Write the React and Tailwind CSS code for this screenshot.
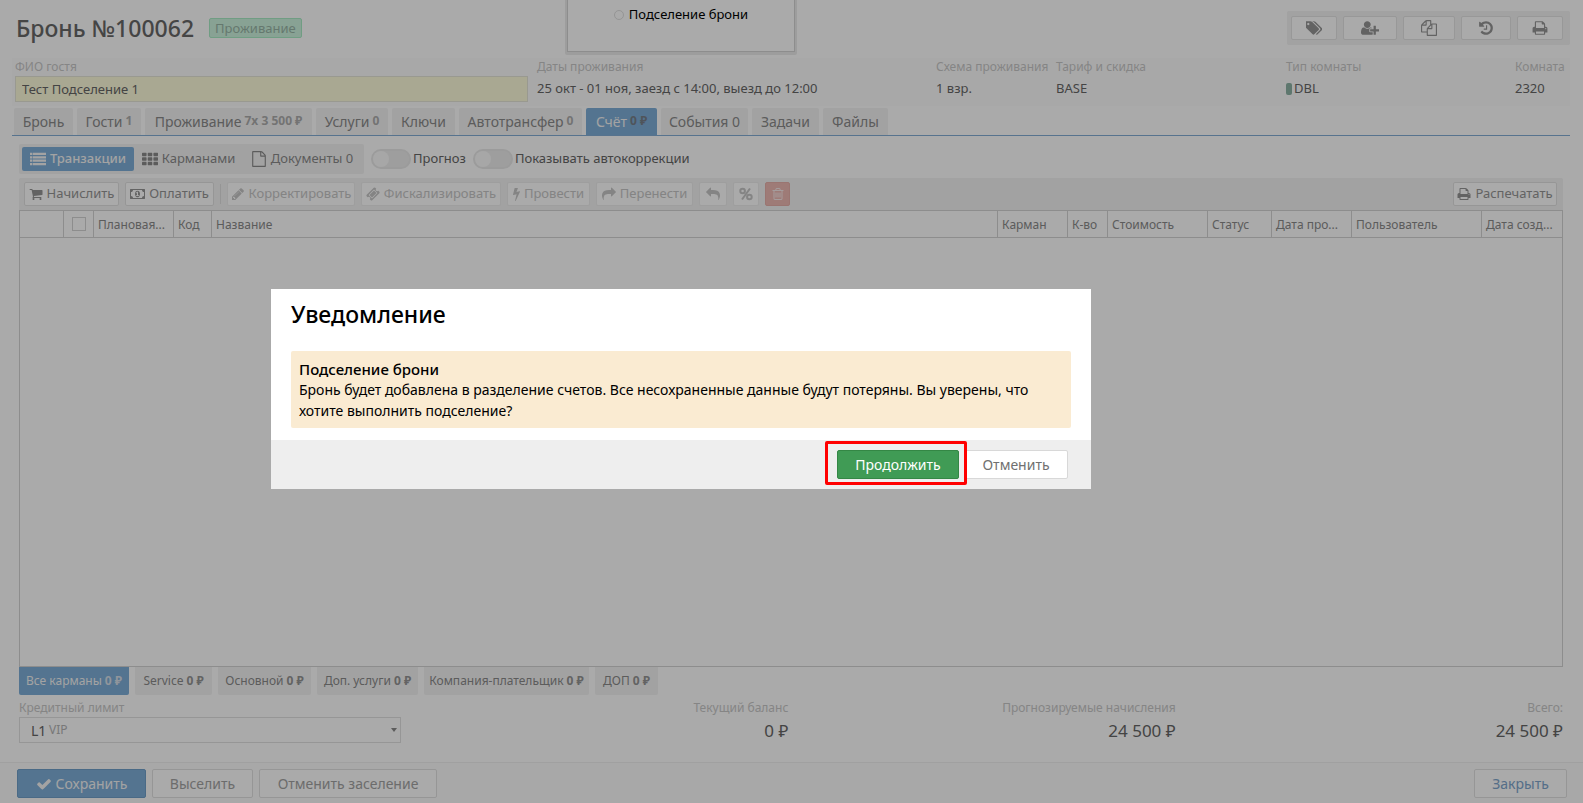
const ICONS = {
  tags: [
    "0 0 1835 1792",
    "M384 448q0-53-37.5-90.5t-90.5-37.5-90.5 37.5-37.5 90.5 37.5 90.5 90.5 37.5 90.5-37.5 37.5-90.5zm1067 576q0 53-37 90l-491 492q-39 37-91 37-53 0-90-37l-715-716q-38-37-64.5-101t-26.5-117v-416q0-52 38-90t90-38h416q53 0 117 26.5t102 64.5l715 714q37 39 37 91zm384 0q0 53-37 90l-491 492q-39 37-91 37-36 0-59-14t-53-45l470-470q37-37 37-90 0-52-37-91l-715-714q-38-38-102-64.5t-117-26.5h224q53 0 117 26.5t102 64.5l715 714q37 39 37 91z",
  ],
  userPlus: [
    "0 0 2048 1792",
    "M704 896q-159 0-271.5-112.5t-112.5-271.5 112.5-271.5 271.5-112.5 271.5 112.5 112.5 271.5-112.5 271.5-271.5 112.5zm960 128h352q13 0 22.5 9.5t9.5 22.5v192q0 13-9.5 22.5t-22.5 9.5h-352v352q0 13-9.5 22.5t-22.5 9.5h-192q-13 0-22.5-9.5t-9.5-22.5v-352h-352q-13 0-22.5-9.5t-9.5-22.5v-192q0-13 9.5-22.5t22.5-9.5h352v-352q0-13 9.5-22.5t22.5-9.5h192q13 0 22.5 9.5t9.5 22.5v352zm-736 224q0 52 38 90t90 38h256v238q-68 50-171 50h-874q-121 0-194-69t-73-190q0-53 3.5-103.5t14-109 26.5-108.5 43-97.5 62-81 85.5-53.5 111.5-20q19 0 39 17 79 61 154.5 91.5t164.5 30.5 164.5-30.5 154.5-91.5q20-17 39-17 132 0 217 96h-223q-52 0-90 38t-38 90v192z",
  ],
  files: [
    "0 0 1792 1792",
    "M1696 384q40 0 68 28t28 68v1216q0 40-28 68t-68 28h-960q-40 0-68-28t-28-68v-288h-544q-40 0-68-28t-28-68v-672q0-40 20-88t48-76l408-408q28-28 76-48t88-20h416q40 0 68 28t28 68v328q68-40 128-40h416zm-544 213l-299 299h299v-299zm-640-384l-299 299h299v-299zm196 647l316-316v-416h-384v416q0 40-28 68t-68 28h-416v640h512v-256q0-40 20-88t48-76zm956 804v-1152h-384v416q0 40-28 68t-68 28h-416v640h896z",
  ],
  history: [
    "0 0 1792 1792",
    "M1664 896q0 156-61 298t-164 245-245 164-298 61q-172 0-327-72.5t-264-204.5q-7-10-6.5-22.5t8.5-20.5l137-138q10-9 25-9 16 2 23 12 73 95 179 147t225 52q104 0 198.5-40.5t163.5-109.5 109.5-163.5 40.5-198.5-40.5-198.5-109.5-163.5-163.5-109.5-198.5-40.5q-98 0-188 35.5t-160 101.5l137 138q31 30 14 69-17 40-59 40h-448q-26 0-45-19t-19-45v-448q0-42 40-59 39-17 69 14l130 129q107-101 244.5-156.5t284.5-55.5q156 0 298 61t245 164 164 245 61 298zm-640-288v448q0 14-9 23t-23 9h-320q-14 0-23-9t-9-23v-64q0-14 9-23t23-9h224v-352q0-14 9-23t23-9h64q14 0 23 9t9 23z",
  ],
  print: [
    "0 0 1792 1792",
    "M448 1536h896v-256h-896v256zm0-640h896v-384h-160q-40 0-68-28t-28-68v-160h-640v640zm1152 64q0-26-19-45t-45-19-45 19-19 45 19 45 45 19 45-19 19-45zm128 0v416q0 13-9.5 22.5t-22.5 9.5h-224v160q0 40-28 68t-68 28h-960q-40 0-68-28t-28-68v-160h-224q-13 0-22.5-9.5t-9.5-22.5v-416q0-79 56.5-135.5t135.5-56.5h64v-544q0-40 28-68t68-28h672q40 0 88 20t76 48l152 152q28 28 48 76t20 88v256h64q79 0 135.5 56.5t56.5 135.5z",
  ],
  list: [
    "0 0 1792 1792",
    "M0 192h256v256h-256zM320 192h1472v256h-1472zM0 576h256v256h-256zM320 576h1472v256h-1472zM0 960h256v256h-256zM320 960h1472v256h-1472zM0 1344h256v256h-256zM320 1344h1472v256h-1472z",
  ],
  grid: [
    "0 0 1792 1792",
    "M60 192h400l52 60v264l-52 60h-400l-60-60v-264zM700 192h400l52 60v264l-52 60h-400l-60-60v-264zM1340 192h400l52 60v264l-52 60h-400l-60-60v-264zM60 704h400l52 60v264l-52 60h-400l-60-60v-264zM700 704h400l52 60v264l-52 60h-400l-60-60v-264zM1340 704h400l52 60v264l-52 60h-400l-60-60v-264zM60 1216h400l52 60v264l-52 60h-400l-60-60v-264zM700 1216h400l52 60v264l-52 60h-400l-60-60v-264zM1340 1216h400l52 60v264l-52 60h-400l-60-60v-264z",
  ],
  file: [
    "0 0 1792 1792",
    "M1596 380q28 28 48 76t20 88v1152q0 40-28 68t-68 28h-1344q-40 0-68-28t-28-68v-1600q0-40 28-68t68-28h896q40 0 88 20t76 48zm-444-244v376h376q-10-29-22-41l-313-313q-12-12-41-22zm384 1528v-1024h-416q-40 0-68-28t-28-68v-416h-768v1536h1280z",
  ],
  cart: [
    "0 0 1792 1792",
    "M704 1536q0 52-38 90t-90 38-90-38-38-90 38-90 90-38 90 38 38 90zm896 0q0 52-38 90t-90 38-90-38-38-90 38-90 90-38 90 38 38 90zm128-1088v512q0 24-16.5 42.5t-40.5 21.5l-1044 122q13 60 13 70 0 16-24 64h920q26 0 45 19t19 45-19 45-45 19h-1024q-26 0-45-19t-19-45q0-11 8-31.5t16-36 21.5-40 15.5-29.5l-177-823h-204q-26 0-45-19t-19-45 19-45 45-19h256q16 0 28.5 6.5t19.5 15.5 13 24.5 8 26 5.5 29.5 4.5 26h1201q26 0 45 19t19 45z",
  ],
  money: [
    "0 0 1920 1792",
    "M768 1152h384v-96h-128v-448h-114l-148 137 77 80q42-37 55-57h2v288h-128v96zm512-256q0 70-21 142t-59.5 134-101.5 101-138 39-138-39-101.5-101-59.5-134-21-142 21-142 59.5-134 101.5-101 138-39 138 39 101.5 101 59.5 134 21 142zm512 256v-512q-106 0-181-75t-75-181h-1152q0 106-75 181t-181 75v512q106 0 181 75t75 181h1152q0-106 75-181t181-75zm128-832v1152q0 26-19 45t-45 19h-1792q-26 0-45-19t-19-45v-1152q0-26 19-45t45-19h1792q26 0 45 19t19 45z",
  ],
  pencil: [
    "0 0 1792 1792",
    "M491 1536l91-91-235-235-91 91v107h128v128h107zm523-928q0-22-22-22-10 0-17 7l-542 542q-7 7-7 17 0 22 22 22 10 0 17-7l542-542q7-7 7-17zm-54-192l416 416-832 832h-416v-416zm683 96q0 53-37 90l-166 166-416-416 166-165q36-38 90-38 53 0 91 38l235 234q37 39 37 91z",
  ],
  ticket: [
    "0 0 1792 1792",
    "M1024 452l316 316-572 572-316-316zm-211 979l618-618q19-19 19-45t-19-45l-362-362q-18-18-45-18t-45 18l-618 618q-19 19-19 45t19 45l362 362q18 18 45 18t45-18zm889-637l-907 908q-37 37-90.5 37t-90.5-37l-126-126q56-56 56-136t-56-136-136-56-136 56l-125-126q-37-37-37-90.5t37-90.5l907-906q37-37 90.5-37t90.5 37l125 125q-56 56-56 136t56 136 136 56 136-56l126 125q37 37 37 90.5t-37 90.5z",
  ],
  bolt: [
    "448 0 896 1792",
    "M1333 566q18 20 7 44l-540 1157q-13 25-42 25-4 0-14-2-17-5-25.5-19t-4.5-30l197-808-406 101q-4 1-12 1-18 0-31-11-18-15-13-39l201-825q4-14 16-23t28-9h328q19 0 32 12.5t13 29.5q0 8-5 18l-171 463 396-98q8-2 12-2 19 0 34 15z",
  ],
  share: [
    "0 0 1792 1792",
    "M1792 640q0 26-19 45l-512 512q-19 19-45 19t-45-19-19-45v-256h-224q-98 0-175.5 6t-154 21.5-133 42.5-105.5 69.5-80 101-48.5 138.5-17.5 181q0 55 5 123 0 6 2.5 23.5t2.5 26.5q0 15-8.5 25t-23.5 10q-16 0-28-17-7-9-13-22t-13.5-30-10.5-24q-127-285-127-451 0-199 53-333 162-403 875-403h224v-256q0-26 19-45t45-19 45 19l512 512q19 19 19 45z",
  ],
  trash: [
    "0 0 1792 1792",
    "M704 736v576q0 14-9 23t-23 9h-64q-14 0-23-9t-9-23v-576q0-14 9-23t23-9h64q14 0 23 9t9 23zm256 0v576q0 14-9 23t-23 9h-64q-14 0-23-9t-9-23v-576q0-14 9-23t23-9h64q14 0 23 9t9 23zm256 0v576q0 14-9 23t-23 9h-64q-14 0-23-9t-9-23v-576q0-14 9-23t23-9h64q14 0 23 9t9 23zm128 724v-948h-896v948q0 22 7 40.5t14.5 27 10.5 8.5h832q3 0 10.5-8.5t14.5-27 7-40.5zm-672-1076h448l-48-117q-7-9-17-11h-317q-10 2-17 11zm928 32v64q0 14-9 23t-23 9h-96v948q0 83-47 143.5t-113 60.5h-832q-66 0-113-58.5t-47-141.5v-952h-96q-14 0-23-9t-9-23v-64q0-14 9-23t23-9h309l70-167q15-37 54-63t79-26h320q40 0 79 26t54 63l70 167h309q14 0 23 9t9 23z",
  ],
  check: [
    "0 0 1792 1792",
    "M1671 566q0 40-28 68l-724 724-136 136q-28 28-68 28t-68-28l-136-136-362-362q-28-28-28-68t28-68l136-136q28-28 68-28t68 28l294 295 656-657q28-28 68-28t68 28l136 136q28 28 28 68z",
  ],
};

function Icon({ name, className = "h-[14px]" }) {
  if (name === "percent") {
    return (
      <svg viewBox="0 0 14 14" className={`shrink-0 ${className}`} fill="none" stroke="currentColor" strokeWidth="2" aria-hidden="true">
        <circle cx="3.6" cy="4" r="2.3" />
        <circle cx="10.4" cy="10" r="2.3" />
        <path d="M11 1.5L3 12.5" />
      </svg>
    );
  }
  const [viewBox, d] = ICONS[name];
  return (
    <svg viewBox={viewBox} className={`shrink-0 ${className}`} fill="currentColor" aria-hidden="true">
      <path d={d} />
    </svg>
  );
}

const headerActions = [
  { icon: "tags", label: "Метки", width: "w-[46px]" },
  { icon: "userPlus", label: "Добавить гостя", width: "w-[54px]" },
  { icon: "files", label: "Копировать", width: "w-[52px]" },
  { icon: "history", label: "История", width: "w-[50px]" },
  { icon: "print", label: "Печать", width: "w-[46px]" },
];

const tabs = [
  { label: "Бронь", width: "w-[59px]" },
  { label: "Гости", extra: "1", width: "w-[64px]" },
  { label: "Проживание", extra: "7x 3 500 ₽", width: "w-[167px]" },
  { label: "Услуги", extra: "0", width: "w-[72px]" },
  { label: "Ключи", width: "w-[63px]" },
  { label: "Автотрансфер", extra: "0", width: "w-[123px]" },
  { label: "Счёт", extra: "0 ₽", width: "w-[71px]", active: true },
  { label: "События 0", width: "w-[87px]" },
  { label: "Задачи", width: "w-[67px]" },
  { label: "Файлы", width: "w-[65px]" },
];

const columns = [
  { label: "Плановая...", width: "w-[80px]" },
  { label: "Код", width: "w-[38px]" },
  { label: "Название", width: "" },
  { label: "Карман", width: "w-[70px]" },
  { label: "К-во", width: "w-[40px]" },
  { label: "Стоимость", width: "w-[100px]" },
  { label: "Статус", width: "w-[64px]" },
  { label: "Дата про...", width: "w-[80px]" },
  { label: "Пользователь", width: "w-[130px]" },
  { label: "Дата созд...", width: "w-[80px]" },
];

const pockets = [
  { label: "Все карманы", width: "w-[110px]", active: true },
  { label: "Service", width: "w-[77px]" },
  { label: "Основной", width: "w-[93px]" },
  { label: "Доп. услуги", width: "w-[101px]" },
  { label: "Компания-плательщик", width: "w-[165px]" },
  { label: "ДОП", width: "w-[63px]" },
];

function ToolButton({ icon, label, children, width, disabled, flip }) {
  return (
    <button
      disabled={disabled}
      aria-label={label}
      className={`flex h-6 items-center justify-center gap-1 rounded-xs border bg-white text-[13px] ${width} ${
        disabled ? "border-[#eeeeee] text-[#c6c6c6]" : "border-[#e2e2e2] text-[#959595]"
      }`}
    >
      <Icon name={icon} className={flip ? "h-[14px] -scale-x-100" : "h-[14px]"} />
      {children}
    </button>
  );
}

function Toggle({ label }) {
  return (
    <label className="flex items-center gap-[2px] text-[13px] text-[#666666]">
      <input
        type="checkbox"
        role="switch"
        className="h-5 w-10 appearance-none rounded-full border-2 border-[#e9e9e9] bg-[#eeeeee] before:block before:size-4 before:rounded-full before:bg-[#fbfbfb]"
      />
      {label}
    </label>
  );
}

function Field({ label, children, width }) {
  return (
    <div className={`shrink-0 ${width}`}>
      <p className="text-[12px] leading-[18px] whitespace-nowrap text-[#c8c8c8]">{label}</p>
      <p className="flex h-[26px] items-center gap-[2px] text-[13px] whitespace-nowrap text-[#666666]">{children}</p>
    </div>
  );
}

function Balance({ label, value }) {
  return (
    <div className="flex-1 text-right">
      <p className="text-[12px] leading-[18px] text-[#c8c8c8]">{label}</p>
      <p className="text-[17px] leading-7 text-[#666666]">{value}</p>
    </div>
  );
}

function BookingPage() {
  return (
    <div className="flex min-h-screen flex-col bg-white">
      <header className="flex h-[58px] items-center justify-between pr-[13px] pb-[2px] pl-4">
        <div className="flex items-center gap-[15px]">
          <h1 className="text-[23px] font-medium text-[#686868]">Бронь №100062</h1>
          <span className="rounded-xs border border-[#a9ecc5] bg-[#ccf3de] px-[5px] text-[13px] leading-[18px] text-[#98b5a6]">Проживание</span>
        </div>
        <div className="flex gap-[6px] rounded-xs bg-[#f3f3f3] py-[5px] pr-[7px] pl-1">
          {headerActions.map((action) => (
            <button
              key={action.icon}
              aria-label={action.label}
              className={`flex h-6 items-center justify-center rounded-xs border border-[#e4e4e4] bg-white text-[#959595] ${action.width}`}
            >
              <Icon name={action.icon} className="h-4" />
            </button>
          ))}
        </div>
      </header>

      <section className="mr-[13px] ml-3 flex h-12 bg-[#fdfdfd] pl-[3px]">
        <div className="w-[522px] shrink-0">
          <label htmlFor="guest" className="block text-[12px] leading-[18px] text-[#c8c8c8]">ФИО гостя</label>
          <input
            id="guest"
            defaultValue="Тест Подселение 1"
            className="block h-[26px] w-[513px] border border-[#e6e6d8] bg-[#fefcdc] px-[6px] text-[13px] text-[#666666]"
          />
        </div>
        <Field label="Даты проживания" width="w-[399px]">25 окт - 01 ноя, заезд с 14:00, выезд до 12:00</Field>
        <Field label="Схема проживания" width="w-[120px]">1 взр.</Field>
        <Field label="Тариф и скидка" width="w-[230px]">BASE</Field>
        <Field label="Тип комнаты" width="w-[229px]">
          <span className="h-3 w-[6px] rounded-xs bg-[#8db3a6]" />
          DBL
        </Field>
        <Field label="Комната" width="w-12">2320</Field>
      </section>

      <nav className="mt-[2px] mr-[13px] ml-3 flex gap-1 border-b border-[#83add6] pl-[2px]">
        {tabs.map((tab) => (
          <a
            key={tab.label}
            href="#"
            className={`flex h-[27px] items-center justify-center gap-[3px] rounded-t-xs text-[14px] whitespace-nowrap ${tab.width} ${
              tab.active ? "bg-[#7eaed8] text-[#f5f5f5]" : "bg-[#f4f4f4] text-[#8a8a8a]"
            }`}
          >
            {tab.label}
            {tab.extra && (
              <span className={`pb-[2px] text-[12px] font-bold ${tab.active ? "text-[#777f88]" : "text-[#adadad]"}`}>{tab.extra}</span>
            )}
          </a>
        ))}
      </nav>

      <main className="flex flex-1 flex-col pt-2 pr-5 pl-[19px]">
        <div className="flex items-center">
          <div className="flex h-[30px] items-center rounded-xs bg-[#f4f4f4] px-[3px] text-[13px] text-[#8a8a8a]">
            <button className="flex h-6 w-[112px] items-center justify-center gap-1 rounded-xs bg-[#7eaed8] font-medium text-[#f5f5f5]">
              <Icon name="list" className="h-4" />
              Транзакции
            </button>
            <button className="flex h-6 w-[109px] items-center justify-center gap-1">
              <Icon name="grid" className="h-4" />
              Карманами
            </button>
            <button className="flex h-6 w-[118px] items-center justify-center gap-1">
              <Icon name="file" className="h-4" />
              Документы 0
            </button>
          </div>
          <div className="ml-[7px] flex gap-[7px]">
            <Toggle label="Прогноз" />
            <Toggle label="Показывать автокоррекции" />
          </div>
        </div>

        <div className="mt-1 flex h-8 items-center gap-[6px] rounded-t-xs bg-[#f3f3f3] pr-[6px] pl-[5px]">
          <ToolButton icon="cart" width="w-[95px]">Начислить</ToolButton>
          <ToolButton icon="money" width="w-[89px]">Оплатить</ToolButton>
          <span className="h-5 w-px bg-[#e0e0e0]" />
          <ToolButton icon="pencil" width="w-[128px]" disabled>Корректировать</ToolButton>
          <ToolButton icon="ticket" width="w-[140px]" disabled>Фискализировать</ToolButton>
          <ToolButton icon="bolt" width="w-[83px]" disabled>Провести</ToolButton>
          <ToolButton icon="share" width="w-[97px]" disabled>Перенести</ToolButton>
          <ToolButton icon="share" label="Вернуть" width="w-7" disabled flip />
          <ToolButton icon="percent" label="Скидка" width="w-[26px]" disabled />
          <button aria-label="Удалить" className="flex h-6 w-[25px] items-center justify-center rounded-xs border border-[#e8b0aa] bg-[#eeb9b3] text-[#f8eaea]">
            <Icon name="trash" />
          </button>
          <div className="flex-1" />
          <ToolButton icon="print" width="w-[104px]">Распечатать</ToolButton>
        </div>

        <div className="flex-1 border border-[#d4d4d4]">
          <table className="w-full table-fixed border-separate border-spacing-0 text-left text-[12px] text-[#8a8a8a]">
            <thead>
              <tr className="h-[27px]">
                <th className="w-[44px] border-r border-b border-[#d4d4d4]" />
                <th className="w-[30px] border-r border-b border-[#d4d4d4]">
                  <input type="checkbox" aria-label="Выбрать все" className="mx-auto block size-[14px] appearance-none border border-[#d4d4d4]" />
                </th>
                {columns.map((col) => (
                  <th key={col.label} className={`border-r border-b border-[#d4d4d4] pt-[2px] pl-[4px] font-normal whitespace-nowrap last:border-r-0 ${col.width}`}>
                    {col.label}
                  </th>
                ))}
              </tr>
            </thead>
          </table>
        </div>

        <div className="flex gap-[6px]">
          {pockets.map((pocket) => (
            <button
              key={pocket.label}
              className={`flex h-7 items-center justify-center gap-[3px] rounded-b-xs text-[12px] whitespace-nowrap ${pocket.width} ${
                pocket.active ? "bg-[#7eaed8] text-[#f5f5f5]" : "bg-[#f4f4f4] text-[#8a8a8a]"
              }`}
            >
              {pocket.label} <b className={pocket.active ? "text-[#d8e0ea]" : "text-[#959595]"}>0 ₽</b>
            </button>
          ))}
        </div>

        <div className="flex h-[67px] pt-1">
          <div className="w-[382px]">
            <label htmlFor="limit" className="block text-[12px] leading-[18px] text-[#c8c8c8]">Кредитный лимит</label>
            <div className="relative">
              <select id="limit" className="h-[26px] w-full appearance-none border border-[#e2e2e2] bg-white px-[11px] text-[14px] text-[#666666]">
                <option>L1</option>
              </select>
              <span className="pointer-events-none absolute top-1 left-[30px] text-[12px] leading-[18px] text-[#b4b4b4]">VIP</span>
              <span className="pointer-events-none absolute top-[11px] right-[4px] border-x-[3px] border-t-4 border-x-transparent border-t-[#8a8a8a]" />
            </div>
          </div>
          <div className="flex flex-1">
            <Balance label="Текущий баланс" value="0 ₽" />
            <Balance label="Прогнозируемые начисления" value="24 500 ₽" />
            <Balance label="Всего:" value="24 500 ₽" />
          </div>
        </div>
      </main>

      <footer className="flex h-[41px] items-start gap-[6px] border-t border-[#f1f1f1] bg-[#fcfcfc] pt-[6px] pr-4 pl-[17px] text-[14px]">
        <button className="flex h-[29px] w-[129px] items-center justify-center gap-1 rounded-xs border border-[#6f9fc9] bg-[#7eaed8] text-[#f5f5f5]">
          <Icon name="check" className="h-4" />
          Сохранить
        </button>
        <button className="h-[29px] w-[101px] rounded-xs border border-[#e2e2e2] bg-white text-[#a3a3a3]">Выселить</button>
        <button className="h-[29px] w-[178px] rounded-xs border border-[#e2e2e2] bg-white text-[#a3a3a3]">Отменить заселение</button>
        <button className="ml-auto h-[29px] w-[93px] rounded-xs border border-[#e2e2e2] bg-white text-[#7ea5cc]">Закрыть</button>
      </footer>
    </div>
  );
}

function ActionPopup() {
  return (
    <div className="absolute inset-x-0 top-0 flex justify-center pr-[221px]">
      <div className="w-[232px] rounded-b-xs bg-[#ececec] px-[2px] pb-[3px]">
        <div className="flex h-[52px] justify-center border border-t-0 border-[#d4d4d4] bg-white pt-[5px]">
          <label className="flex h-5 items-center gap-[5px] text-[13px] text-black">
            <input type="radio" name="action" className="size-[10px] appearance-none rounded-full border border-[#e0e0e0]" />
            Подселение брони
          </label>
        </div>
      </div>
    </div>
  );
}

function NoticeDialog() {
  return (
    <div className="fixed inset-0 flex items-start justify-center bg-black/[0.333] pt-[289px] pr-[221px]">
      <div role="dialog" aria-labelledby="notice-title" className="w-[820px] bg-white text-black">
        <h2 id="notice-title" className="px-5 pt-[9px] pb-[21px] text-[23px] leading-8 font-medium">Уведомление</h2>
        <div className="mx-5 mb-3 rounded-xs bg-[#faebd2] px-2 pt-2 pb-[7px] text-[14px] leading-[21px]">
          <p className="text-[15px] leading-5 font-medium">Подселение брони</p>
          <p>
            Бронь будет добавлена в разделение счетов. Все несохраненные данные будут потеряны. Вы уверены, что хотите выполнить подселение?
          </p>
        </div>
        <div className="flex h-[49px] items-center justify-end gap-[5px] bg-[#eeeeee] pr-[23px] text-[14px]">
          <div className="relative">
            <button className="block h-[29px] w-[122px] rounded-xs border border-[#348745] bg-[#409b55] text-white">Продолжить</button>
            <span className="pointer-events-none absolute -top-[9px] -right-2 -bottom-[6px] -left-3 rounded-xs border-3 border-[#ff0000]" />
          </div>
          <button className="h-[29px] w-[104px] rounded-xs border border-[#d8d8d8] bg-white text-[#707070]">Отменить</button>
        </div>
      </div>
    </div>
  );
}

export default function App() {
  return (
    <div className="relative font-['Noto_Sans','Open_Sans',sans-serif]">
      <BookingPage />
      <ActionPopup />
      <NoticeDialog />
    </div>
  );
}
